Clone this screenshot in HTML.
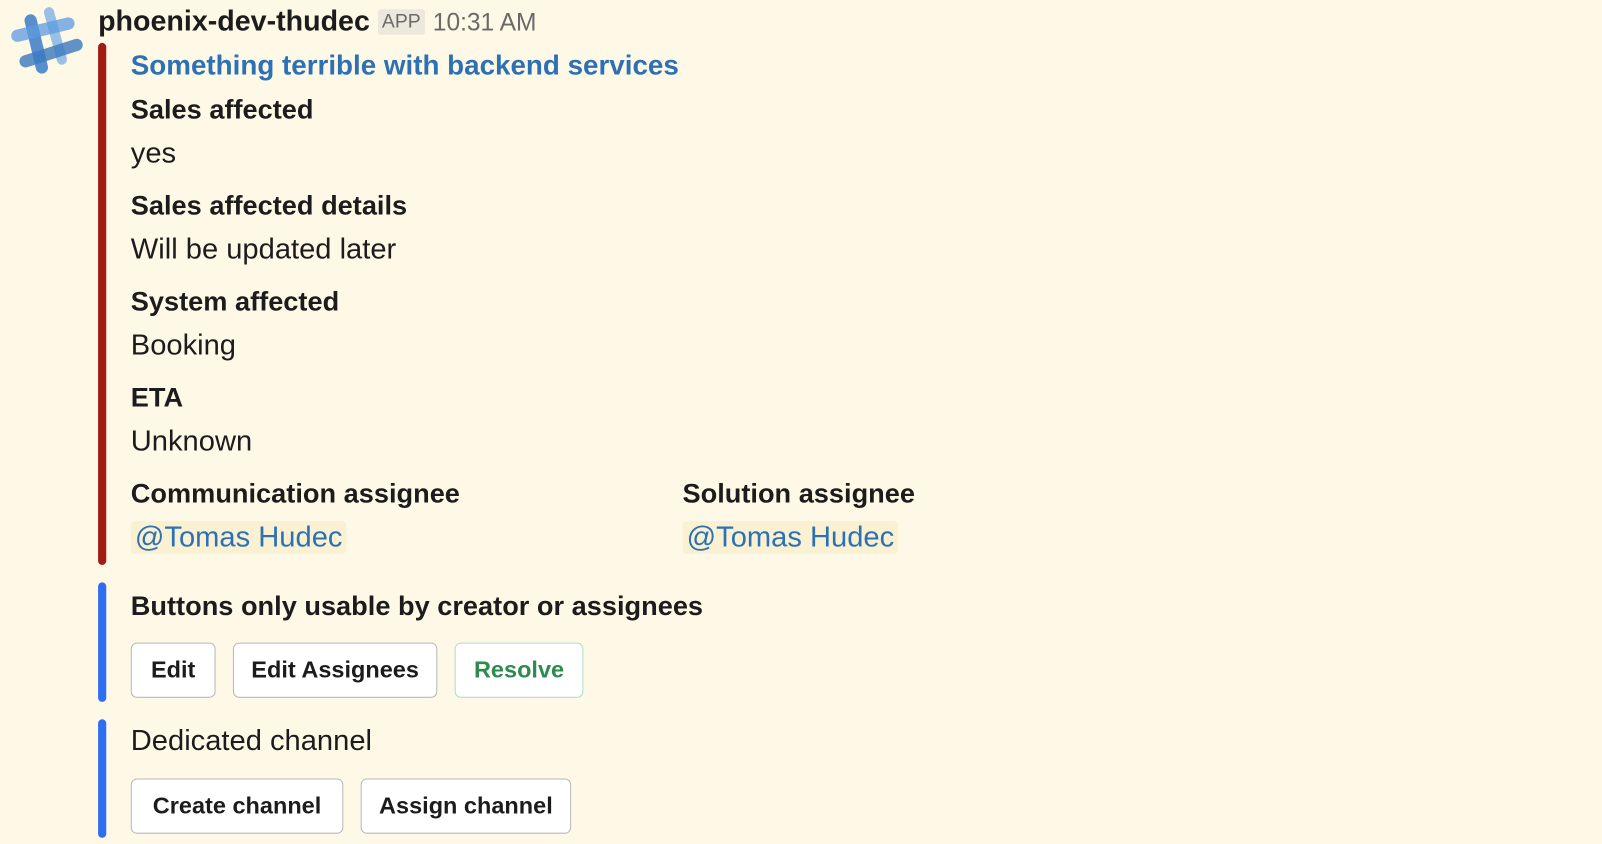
<!DOCTYPE html>
<html><head><style>
html,body{margin:0;padding:0;background:#fef8e6;width:1602px;height:844px;overflow:hidden;font-family:"Liberation Sans",sans-serif;color:#1d1c1d}
#w{position:absolute;left:0;top:0;width:1568px;height:826px;transform:scale(1.0217);transform-origin:0 0}
.t{position:absolute;left:128px;font-size:28.5px;line-height:34px;white-space:nowrap}
.b{font-weight:bold;font-size:26.6px}
.bar{position:absolute;left:96px;width:8px;border-radius:4px}
.btn{position:absolute;height:54px;border:1.5px solid #b8b8b8;border-radius:6px;background:#fff;font-weight:bold;font-size:23px;line-height:51px;text-align:center;box-sizing:border-box;color:#1d1c1d}
.m{background:#f9f1d2;color:#2d71b4;border-radius:4px;padding:0 4px;margin-left:-4px}
</style></head><body><div id="w">
<svg style="position:absolute;left:0;top:0" width="90" height="80">
<line x1="30" y1="20" x2="41" y2="66" stroke="#3b7cc9" stroke-width="12" stroke-linecap="round" opacity=".85"/>
<line x1="48" y1="12" x2="61" y2="60" stroke="#7fb0e3" stroke-width="10" stroke-linecap="round" fill="none" stroke-dasharray="3 2" opacity=".8"/>
<line x1="17" y1="35" x2="67" y2="23" stroke="#5c9be0" stroke-width="12" stroke-linecap="round" opacity=".75"/>
<line x1="25" y1="60" x2="75" y2="44" stroke="#3a78bf" stroke-width="12" stroke-linecap="round" opacity=".8"/>
</svg>
<div class="t b" style="left:96px;top:4px;font-size:28px">phoenix-dev-thudec <span style="font-weight:normal;font-size:19px;background:#ece8dc;color:#6a6a6a;padding:2px 4px;border-radius:3px;vertical-align:3px">APP</span> <span style="font-weight:normal;font-size:24px;color:#6a6a6a">10:31 AM</span></div>
<div class="bar" style="top:42px;height:511px;background:#a11c16"></div>
<div class="bar" style="top:570px;height:117px;background:#2e6ef0"></div>
<div class="bar" style="top:704px;height:116px;background:#2e6ef0"></div>
<div class="t b" style="top:47px;color:#2d71b4;font-size:27.2px">Something terrible with backend services</div>
<div class="t b" style="top:90px">Sales affected</div>
<div class="t" style="top:133px">yes</div>
<div class="t b" style="top:184px">Sales affected details</div>
<div class="t" style="top:227px">Will be updated later</div>
<div class="t b" style="top:278px">System affected</div>
<div class="t" style="top:321px">Booking</div>
<div class="t b" style="top:372px">ETA</div>
<div class="t" style="top:415px">Unknown</div>
<div class="t b" style="top:466px">Communication assignee</div>
<div class="t b" style="top:466px;left:668px">Solution assignee</div>
<div class="t" style="top:509px;left:132px"><span class="m">@Tomas Hudec</span></div>
<div class="t" style="top:509px;left:672px"><span class="m">@Tomas Hudec</span></div>
<div class="t b" style="top:576px">Buttons only usable by creator or assignees</div>
<div class="btn" style="left:128px;top:629px;width:83px">Edit</div>
<div class="btn" style="left:228px;top:629px;width:200px">Edit Assignees</div>
<div class="btn" style="left:445px;top:629px;width:126px;color:#2f8a50;border-color:#b3dcc6">Resolve</div>
<div class="t" style="top:708px">Dedicated channel</div>
<div class="btn" style="left:128px;top:762px;width:208px">Create channel</div>
<div class="btn" style="left:353px;top:762px;width:206px">Assign channel</div>
</div></body></html>
